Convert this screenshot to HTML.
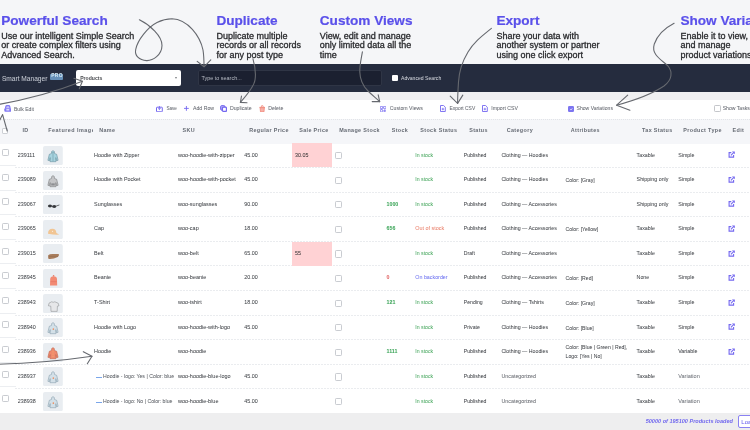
<!DOCTYPE html><html><head><meta charset="utf-8"><style>
*{box-sizing:border-box}
html,body{margin:0;padding:0}
body{width:750px;height:430px;overflow:hidden;position:relative;font-family:"Liberation Sans",sans-serif;background:#fff}
.a{position:absolute;white-space:nowrap;line-height:1;-webkit-text-stroke:0.03px currentColor}
.r{position:absolute}
#wrap{position:absolute;left:0;top:0;width:750px;height:430px;will-change:transform}
</style></head><body><div id="wrap">
<div class="r" style="left:0;top:0;width:750px;height:64px;background:#f5f6f8"></div><div class="r" style="left:0;top:64px;width:750px;height:27.6px;background:#252c3e"></div><div class="r" style="left:0;top:91.6px;width:750px;height:8.4px;background:#efeff1"></div><div class="r" style="left:0;top:100px;width:750px;height:18px;background:#fff"></div><div class="r" style="left:0;top:119px;width:750px;height:24.9px;background:#f5f6f9;border-top:1px dotted #e2e4e8"></div><div class="r" style="left:0;top:412.5px;width:750px;height:18px;background:#eeeeef"></div><div class="a" style="left:1.20px;top:14.09px;font-size:13.6px;color:#5a50ea;font-weight:bold;-webkit-text-stroke:0.2px currentColor">Powerful Search</div>
<div class="a" style="left:1.20px;top:31.68px;font-size:9.0px;color:#2a2b2e;font-weight:normal;-webkit-text-stroke:0.3px currentColor">Use our intelligent Simple Search</div>
<div class="a" style="left:1.20px;top:41.38px;font-size:9.0px;color:#2a2b2e;font-weight:normal;-webkit-text-stroke:0.3px currentColor">or create complex filters using</div>
<div class="a" style="left:1.20px;top:51.08px;font-size:9.0px;color:#2a2b2e;font-weight:normal;-webkit-text-stroke:0.3px currentColor">Advanced Search.</div>
<div class="a" style="left:216.40px;top:14.09px;font-size:13.6px;color:#5a50ea;font-weight:bold;-webkit-text-stroke:0.2px currentColor">Duplicate</div>
<div class="a" style="left:216.40px;top:31.68px;font-size:9.0px;color:#2a2b2e;font-weight:normal;-webkit-text-stroke:0.3px currentColor">Duplicate multiple</div>
<div class="a" style="left:216.40px;top:41.38px;font-size:9.0px;color:#2a2b2e;font-weight:normal;-webkit-text-stroke:0.3px currentColor">records or all records</div>
<div class="a" style="left:216.40px;top:51.08px;font-size:9.0px;color:#2a2b2e;font-weight:normal;-webkit-text-stroke:0.3px currentColor">for any post type</div>
<div class="a" style="left:319.80px;top:14.09px;font-size:13.6px;color:#5a50ea;font-weight:bold;-webkit-text-stroke:0.2px currentColor">Custom Views</div>
<div class="a" style="left:319.80px;top:31.68px;font-size:9.0px;color:#2a2b2e;font-weight:normal;-webkit-text-stroke:0.3px currentColor">View, edit and manage</div>
<div class="a" style="left:319.80px;top:41.38px;font-size:9.0px;color:#2a2b2e;font-weight:normal;-webkit-text-stroke:0.3px currentColor">only limited data all the</div>
<div class="a" style="left:319.80px;top:51.08px;font-size:9.0px;color:#2a2b2e;font-weight:normal;-webkit-text-stroke:0.3px currentColor">time</div>
<div class="a" style="left:496.40px;top:14.09px;font-size:13.6px;color:#5a50ea;font-weight:bold;-webkit-text-stroke:0.2px currentColor">Export</div>
<div class="a" style="left:496.40px;top:31.68px;font-size:9.0px;color:#2a2b2e;font-weight:normal;-webkit-text-stroke:0.3px currentColor">Share your data with</div>
<div class="a" style="left:496.40px;top:41.38px;font-size:9.0px;color:#2a2b2e;font-weight:normal;-webkit-text-stroke:0.3px currentColor">another system or partner</div>
<div class="a" style="left:496.40px;top:51.08px;font-size:9.0px;color:#2a2b2e;font-weight:normal;-webkit-text-stroke:0.3px currentColor">using one click export</div>
<div class="a" style="left:680.40px;top:14.09px;font-size:13.6px;color:#5a50ea;font-weight:bold;-webkit-text-stroke:0.2px currentColor">Show Variations</div>
<div class="a" style="left:680.40px;top:31.68px;font-size:9.0px;color:#2a2b2e;font-weight:normal;-webkit-text-stroke:0.3px currentColor">Enable it to view, edit</div>
<div class="a" style="left:680.40px;top:41.38px;font-size:9.0px;color:#2a2b2e;font-weight:normal;-webkit-text-stroke:0.3px currentColor">and manage</div>
<div class="a" style="left:680.40px;top:51.08px;font-size:9.0px;color:#2a2b2e;font-weight:normal;-webkit-text-stroke:0.3px currentColor">product variations</div>
<div class="a" style="left:1.90px;top:76.31px;font-size:6.6px;color:#c9cdd6;font-weight:normal;">Smart Manager</div>
<div class="r" style="left:49.8px;top:73.5px;width:13px;height:6.5px;background:#6690b8;border-radius:1px"></div><div class="a" style="left:51.20px;top:74.45px;font-size:4.9px;color:#d8ecf6;font-weight:bold;letter-spacing:0.35px;-webkit-text-stroke:0">PRO</div>
<div class="r" style="left:76.4px;top:70.3px;width:104.9px;height:15.8px;background:#fff;border-radius:2px"></div><div class="a" style="left:80.20px;top:75.98px;font-size:5.1px;color:#4a4c50;font-weight:bold;-webkit-text-stroke:0">Products</div>
<div class="r" style="left:175.2px;top:77.3px;width:0;height:0;border-left:1.7px solid transparent;border-right:1.7px solid transparent;border-top:2.2px solid #7a7c80"></div><div class="r" style="left:197.7px;top:70.4px;width:184px;height:15.5px;background:#1b2030;border:0.6px solid #2f3545;border-radius:2px"></div><div class="a" style="left:201.50px;top:75.59px;font-size:5.45px;color:#b8bcc5;font-weight:normal;-webkit-text-stroke:0">Type to search...</div>
<div class="r" style="left:392px;top:75.4px;width:6px;height:5.8px;background:#fff;border-radius:1px"></div><div class="a" style="left:401.00px;top:75.88px;font-size:5.1px;color:#d0d3da;font-weight:normal;">Advanced Search</div>
<svg class="r" style="left:3.7px;top:104.8px" width="7.6" height="7.2" viewBox="0 0 7.6 7.2"><path d="M1.4 3.6 L1.9 1.5 Q2.1 0.7 2.9 0.7 H4.7 Q5.5 0.7 5.7 1.5 L6.2 3.6" fill="#c9c4fa" stroke="#8379f4" stroke-width="1.2"/><rect x="0.3" y="3.2" width="7" height="3.6" rx="1" fill="#8379f4"/><rect x="2.3" y="4.3" width="3" height="1.1" fill="#fff"/></svg>
<div class="a" style="left:14.00px;top:106.73px;font-size:5.05px;color:#60646c;font-weight:normal;">Bulk Edit</div>
<svg class="r" style="left:156.2px;top:106px" width="7" height="6.2" viewBox="0 0 7 6.2"><rect x="0.5" y="1.2" width="5.8" height="4.6" rx="0.5" fill="none" stroke="#7468f0" stroke-width="1"/><path d="M3.4 0 V3.4 M2.2 2.4 L3.4 3.6 L4.6 2.4" fill="none" stroke="#7468f0" stroke-width="0.9"/></svg>
<div class="a" style="left:166.40px;top:107.11px;font-size:4.6px;color:#60646c;font-weight:normal;">Save</div>
<svg class="r" style="left:183.9px;top:105.8px" width="5" height="5" viewBox="0 0 5 5"><path d="M2.4 0 V4.8 M0 2.4 H4.8" stroke="#7468f0" stroke-width="0.9"/></svg>
<div class="a" style="left:193.00px;top:105.90px;font-size:5.2px;color:#60646c;font-weight:normal;">Add Row</div>
<svg class="r" style="left:220px;top:105.1px" width="7.2" height="7.2" viewBox="0 0 7.2 7.2"><rect x="0.6" y="0.6" width="4.4" height="4.6" rx="1.2" fill="#b3adf7" stroke="#7468f0" stroke-width="1"/><rect x="2.4" y="2.2" width="4.1" height="4.3" rx="1.2" fill="#fff" stroke="#7468f0" stroke-width="1.3"/></svg>
<div class="a" style="left:229.90px;top:105.90px;font-size:5.2px;color:#60646c;font-weight:normal;">Duplicate</div>
<svg class="r" style="left:258.6px;top:104.8px" width="6.5" height="7.4" viewBox="0 0 6.5 7.4"><path d="M2.2 2.2 L2.6 0.7 H3.9 L4.3 2.2" fill="none" stroke="#f08a7c" stroke-width="0.8"/><path d="M0.4 2.4 H6.1" stroke="#f08a7c" stroke-width="1"/><path d="M1.1 2.8 H5.4 L5 6.9 H1.5 Z" fill="#f7b0a8" stroke="#f08a7c" stroke-width="0.8"/></svg>
<div class="a" style="left:268.30px;top:105.90px;font-size:5.2px;color:#60646c;font-weight:normal;">Delete</div>
<svg class="r" style="left:379.6px;top:105.5px" width="6.6" height="6.6" viewBox="0 0 6.6 6.6"><rect x="0.3" y="0.3" width="2.4" height="2.4" rx="0.5" fill="none" stroke="#7468f0" stroke-width="0.8"/><rect x="3.6" y="0.3" width="2.4" height="2.4" rx="0.5" fill="none" stroke="#7468f0" stroke-width="0.8"/><rect x="0.3" y="3.6" width="2.4" height="2.4" rx="0.5" fill="none" stroke="#7468f0" stroke-width="0.8"/><path d="M4.8 3.4 V6.4 M3.3 4.9 H6.3" stroke="#7468f0" stroke-width="0.8"/></svg>
<div class="a" style="left:389.80px;top:105.90px;font-size:5.2px;color:#60646c;font-weight:normal;">Custom Views</div>
<svg class="r" style="left:440px;top:105.3px" width="6" height="7" viewBox="0 0 6 7"><path d="M0.5 0.5 H3.6 L5.3 2.2 V6.5 H0.5 Z" fill="none" stroke="#7468f0" stroke-width="0.9"/><path d="M2.9 2.8 V5.3 M1.7 4.1 H4.1" stroke="#7468f0" stroke-width="0.8"/></svg>
<div class="a" style="left:449.40px;top:106.81px;font-size:4.95px;color:#60646c;font-weight:normal;">Export CSV</div>
<svg class="r" style="left:482px;top:105.3px" width="6" height="7" viewBox="0 0 6 7"><path d="M0.5 0.5 H3.6 L5.3 2.2 V6.5 H0.5 Z" fill="none" stroke="#7468f0" stroke-width="0.9"/><path d="M2.9 2.8 V5.3 M1.7 4.1 H4.1" stroke="#7468f0" stroke-width="0.8"/></svg>
<div class="a" style="left:491.20px;top:105.90px;font-size:5.2px;color:#60646c;font-weight:normal;">Import CSV</div>
<div class="r" style="left:567.6px;top:105.6px;width:6.4px;height:6.2px;background:#7d75f0;border-radius:1.2px"></div><svg class="r" style="left:567.6px;top:105.6px" width="6.4" height="6.2" viewBox="0 0 6.4 6.2"><path d="M2.2 3.3 L3 4 L4.3 2.4" fill="none" stroke="#fff" stroke-width="0.7"/></svg>
<div class="a" style="left:576.50px;top:105.98px;font-size:5.1px;color:#60646c;font-weight:normal;">Show Variations</div>
<div class="r" style="left:714.3px;top:105.1px;width:6.4px;height:6.5px;background:#fff;border:0.7px solid #c4c6ca;border-radius:1.2px"></div><div class="a" style="left:722.70px;top:105.98px;font-size:5.1px;color:#60646c;font-weight:normal;">Show Tasks</div>
<div class="r" style="left:2.1px;top:127.5px;width:6.4px;height:6.3px;background:#fff;border:0.6px solid #cdd0d5;border-radius:1px"></div><div class="a" style="left:22.50px;top:127.93px;font-size:5.4px;color:#666b74;font-weight:bold;letter-spacing:0.37px;-webkit-text-stroke:0">ID</div>
<div class="a" style="left:48.30px;top:127.93px;font-size:5.4px;color:#666b74;font-weight:bold;letter-spacing:0.37px;-webkit-text-stroke:0;width:44.5px;overflow:hidden;letter-spacing:0.5px">Featured Image</div>
<div class="a" style="left:99.20px;top:127.93px;font-size:5.4px;color:#666b74;font-weight:bold;letter-spacing:0.37px;-webkit-text-stroke:0">Name</div>
<div class="a" style="left:182.50px;top:127.93px;font-size:5.4px;color:#666b74;font-weight:bold;letter-spacing:0.37px;-webkit-text-stroke:0">SKU</div>
<div class="a" style="left:249.20px;top:127.93px;font-size:5.4px;color:#666b74;font-weight:bold;letter-spacing:0.37px;-webkit-text-stroke:0">Regular Price</div>
<div class="a" style="left:299.20px;top:127.93px;font-size:5.4px;color:#666b74;font-weight:bold;letter-spacing:0.37px;-webkit-text-stroke:0">Sale Price</div>
<div class="a" style="left:339.20px;top:127.93px;font-size:5.4px;color:#666b74;font-weight:bold;letter-spacing:0.37px;-webkit-text-stroke:0">Manage Stock</div>
<div class="a" style="left:391.70px;top:127.93px;font-size:5.4px;color:#666b74;font-weight:bold;letter-spacing:0.37px;-webkit-text-stroke:0">Stock</div>
<div class="a" style="left:420.30px;top:127.93px;font-size:5.4px;color:#666b74;font-weight:bold;letter-spacing:0.37px;-webkit-text-stroke:0">Stock Status</div>
<div class="a" style="left:469.20px;top:127.93px;font-size:5.4px;color:#666b74;font-weight:bold;letter-spacing:0.37px;-webkit-text-stroke:0">Status</div>
<div class="a" style="left:506.70px;top:127.93px;font-size:5.4px;color:#666b74;font-weight:bold;letter-spacing:0.37px;-webkit-text-stroke:0">Category</div>
<div class="a" style="left:570.80px;top:127.93px;font-size:5.4px;color:#666b74;font-weight:bold;letter-spacing:0.37px;-webkit-text-stroke:0">Attributes</div>
<div class="a" style="left:642.00px;top:127.93px;font-size:5.4px;color:#666b74;font-weight:bold;letter-spacing:0.37px;-webkit-text-stroke:0">Tax Status</div>
<div class="a" style="left:683.30px;top:127.93px;font-size:5.4px;color:#666b74;font-weight:bold;letter-spacing:0.37px;-webkit-text-stroke:0">Product Type</div>
<div class="a" style="left:732.50px;top:127.93px;font-size:5.4px;color:#666b74;font-weight:bold;letter-spacing:0.37px;-webkit-text-stroke:0">Edit</div>
<div class="r" style="left:15px;top:166.90px;width:735px;height:1px;background:repeating-linear-gradient(90deg,#eaecef 0 2px,transparent 2px 3px)"></div><div class="r" style="left:0;top:164.90px;width:16px;height:1px;background:#eceef1"></div><div class="r" style="left:2px;top:149.10px;width:7px;height:7.2px;background:#fff;border:0.7px solid #c9ccd1;border-radius:1.2px"></div><div class="a" style="left:17.80px;top:153.30px;font-size:5.36px;color:#3e4146;font-weight:normal;">239111</div>
<svg class="r" style="left:42.9px;top:145.90px" width="19.8" height="19.2" viewBox="0 0 19.8 19.2"><rect width="19.8" height="19.2" rx="2" fill="#e9edf1"/><g transform="translate(10,10) scale(0.88) translate(-10,-9.5)"><path d="M8.3,6.6 Q8,3.6 10,3.4 Q12,3.6 11.7,6.6 L14.2,7.6 L15.8,14.4 L14,14.9 L13.2,11.3 L13.3,16 L6.7,16 L6.8,11.3 L6,14.9 L4.2,14.4 L5.8,7.6 Z" fill="#a6d3df" stroke="#5f8795" stroke-width="0.6"/><path d="M10,6.2 V15.5 M8.2,5 Q10,7 11.8,5" stroke="#5f8795" stroke-width="0.5" fill="none"/></g></svg><div class="a" style="left:94.10px;top:153.24px;font-size:5.43px;color:#3e4146;font-weight:normal;">Hoodie with Zipper</div>
<div class="a" style="left:178.00px;top:153.20px;font-size:5.48px;color:#3e4146;font-weight:normal;">woo-hoodie-with-zipper</div>
<div class="a" style="left:244.30px;top:153.30px;font-size:5.36px;color:#3e4146;font-weight:normal;">45.00</div>
<div class="r" style="left:292.3px;top:143.30px;width:39.8px;height:24.2px;background:#ffd2d4"></div><div class="a" style="left:295.00px;top:153.30px;font-size:5.36px;color:#333;font-weight:normal;">30.05</div>
<div class="r" style="left:334.5px;top:152.00px;width:7.2px;height:7.2px;background:#fff;border:0.7px solid #c9ccd1;border-radius:1.2px"></div><div class="a" style="left:415.30px;top:153.44px;font-size:5.2px;color:#4aa861;font-weight:normal;">In stock</div>
<div class="a" style="left:463.80px;top:153.46px;font-size:5.17px;color:#3e4146;font-weight:normal;">Published</div>
<div class="a" style="left:501.40px;top:153.39px;font-size:5.26px;color:#3e4146;font-weight:normal;">Clothing — Hoodies</div>
<div class="a" style="left:636.60px;top:153.35px;font-size:5.3px;color:#3e4146;font-weight:normal;">Taxable</div>
<div class="a" style="left:678.20px;top:153.33px;font-size:5.33px;color:#3e4146;font-weight:normal;">Simple</div>
<svg class="r" style="left:727.9px;top:151.20000000000002px" width="7" height="7" viewBox="0 0 7 7"><path d="M3.3 1.6 H1.1 V6.1 H5.6 V4" fill="none" stroke="#7468f0" stroke-width="1.1"/><path d="M2.9 4.3 L5.6 1.6" fill="none" stroke="#7468f0" stroke-width="1.1"/><path d="M3.9 0.4 H6.8 V3.3 Z" fill="#7468f0"/></svg>
<div class="r" style="left:15px;top:191.50px;width:735px;height:1px;background:repeating-linear-gradient(90deg,#eaecef 0 2px,transparent 2px 3px)"></div><div class="r" style="left:0;top:189.50px;width:16px;height:1px;background:#eceef1"></div><div class="r" style="left:2px;top:173.70px;width:7px;height:7.2px;background:#fff;border:0.7px solid #c9ccd1;border-radius:1.2px"></div><div class="a" style="left:17.80px;top:177.30px;font-size:5.36px;color:#3e4146;font-weight:normal;">239089</div>
<svg class="r" style="left:42.9px;top:170.50px" width="19.8" height="19.2" viewBox="0 0 19.8 19.2"><rect width="19.8" height="19.2" rx="2" fill="#e9edf1"/><g transform="translate(10,10) scale(0.88) translate(-10,-9.5)"><path d="M8.3,6.6 Q8,3.6 10,3.4 Q12,3.6 11.7,6.6 L14.2,7.6 L15.8,14.4 L14,14.9 L13.2,11.3 L13.3,16 L6.7,16 L6.8,11.3 L6,14.9 L4.2,14.4 L5.8,7.6 Z" fill="#c4c5c7" stroke="#6f7073" stroke-width="0.6"/><rect x="8" y="12.2" width="4" height="2.4" fill="#8d8e91"/></g></svg><div class="a" style="left:94.10px;top:177.24px;font-size:5.43px;color:#3e4146;font-weight:normal;">Hoodie with Pocket</div>
<div class="a" style="left:178.00px;top:177.20px;font-size:5.48px;color:#3e4146;font-weight:normal;">woo-hoodie-with-pocket</div>
<div class="a" style="left:244.30px;top:177.30px;font-size:5.36px;color:#3e4146;font-weight:normal;">45.00</div>
<div class="r" style="left:334.5px;top:176.60px;width:7.2px;height:7.2px;background:#fff;border:0.7px solid #c9ccd1;border-radius:1.2px"></div><div class="a" style="left:415.30px;top:177.44px;font-size:5.2px;color:#4aa861;font-weight:normal;">In stock</div>
<div class="a" style="left:463.80px;top:177.46px;font-size:5.17px;color:#3e4146;font-weight:normal;">Published</div>
<div class="a" style="left:501.40px;top:177.39px;font-size:5.26px;color:#3e4146;font-weight:normal;">Clothing — Hoodies</div>
<div class="a" style="left:565.60px;top:177.50px;font-size:5.13px;color:#3e4146;font-weight:normal;">Color: [Gray]</div>
<div class="a" style="left:636.60px;top:177.35px;font-size:5.3px;color:#3e4146;font-weight:normal;">Shipping only</div>
<div class="a" style="left:678.20px;top:177.33px;font-size:5.33px;color:#3e4146;font-weight:normal;">Simple</div>
<svg class="r" style="left:727.9px;top:175.8px" width="7" height="7" viewBox="0 0 7 7"><path d="M3.3 1.6 H1.1 V6.1 H5.6 V4" fill="none" stroke="#7468f0" stroke-width="1.1"/><path d="M2.9 4.3 L5.6 1.6" fill="none" stroke="#7468f0" stroke-width="1.1"/><path d="M3.9 0.4 H6.8 V3.3 Z" fill="#7468f0"/></svg>
<div class="r" style="left:15px;top:216.10px;width:735px;height:1px;background:repeating-linear-gradient(90deg,#eaecef 0 2px,transparent 2px 3px)"></div><div class="r" style="left:0;top:214.10px;width:16px;height:1px;background:#eceef1"></div><div class="r" style="left:2px;top:198.30px;width:7px;height:7.2px;background:#fff;border:0.7px solid #c9ccd1;border-radius:1.2px"></div><div class="a" style="left:17.80px;top:202.30px;font-size:5.36px;color:#3e4146;font-weight:normal;">239067</div>
<svg class="r" style="left:42.9px;top:195.10px" width="19.8" height="19.2" viewBox="0 0 19.8 19.2"><rect width="19.8" height="19.2" rx="2" fill="#e9edf1"/><ellipse cx="7" cy="11" rx="2.1" ry="1.5" fill="#35373b"/><ellipse cx="11.2" cy="11.5" rx="2.2" ry="1.5" fill="#35373b"/><path d="M8.8,11.2 L9.3,11.3 M13.2,11 L16.4,10" stroke="#4a4c50" stroke-width="0.8"/></svg><div class="a" style="left:94.10px;top:202.24px;font-size:5.43px;color:#3e4146;font-weight:normal;">Sunglasses</div>
<div class="a" style="left:178.00px;top:202.20px;font-size:5.48px;color:#3e4146;font-weight:normal;">woo-sunglasses</div>
<div class="a" style="left:244.30px;top:202.30px;font-size:5.36px;color:#3e4146;font-weight:normal;">90.00</div>
<div class="r" style="left:334.5px;top:201.20px;width:7.2px;height:7.2px;background:#fff;border:0.7px solid #c9ccd1;border-radius:1.2px"></div><div class="a" style="left:386.50px;top:202.35px;font-size:5.3px;color:#3ea55a;font-weight:bold;">1000</div>
<div class="a" style="left:415.30px;top:202.44px;font-size:5.2px;color:#4aa861;font-weight:normal;">In stock</div>
<div class="a" style="left:463.80px;top:202.46px;font-size:5.17px;color:#3e4146;font-weight:normal;">Published</div>
<div class="a" style="left:501.40px;top:202.39px;font-size:5.26px;color:#3e4146;font-weight:normal;">Clothing — Accessories</div>
<div class="a" style="left:636.60px;top:202.35px;font-size:5.3px;color:#3e4146;font-weight:normal;">Shipping only</div>
<div class="a" style="left:678.20px;top:202.33px;font-size:5.33px;color:#3e4146;font-weight:normal;">Simple</div>
<svg class="r" style="left:727.9px;top:200.40000000000003px" width="7" height="7" viewBox="0 0 7 7"><path d="M3.3 1.6 H1.1 V6.1 H5.6 V4" fill="none" stroke="#7468f0" stroke-width="1.1"/><path d="M2.9 4.3 L5.6 1.6" fill="none" stroke="#7468f0" stroke-width="1.1"/><path d="M3.9 0.4 H6.8 V3.3 Z" fill="#7468f0"/></svg>
<div class="r" style="left:15px;top:240.70px;width:735px;height:1px;background:repeating-linear-gradient(90deg,#eaecef 0 2px,transparent 2px 3px)"></div><div class="r" style="left:0;top:238.70px;width:16px;height:1px;background:#eceef1"></div><div class="r" style="left:2px;top:222.90px;width:7px;height:7.2px;background:#fff;border:0.7px solid #c9ccd1;border-radius:1.2px"></div><div class="a" style="left:17.80px;top:226.30px;font-size:5.36px;color:#3e4146;font-weight:normal;">239065</div>
<svg class="r" style="left:42.9px;top:219.70px" width="19.8" height="19.2" viewBox="0 0 19.8 19.2"><rect width="19.8" height="19.2" rx="2" fill="#e9edf1"/><path d="M5,13.8 Q5,8.8 9.5,8.8 Q13,8.8 13.4,13 L16.2,14.6 Q12,15 5,13.8 Z" fill="#f1c593"/><circle cx="9.6" cy="11.2" r="0.5" fill="#fff"/></svg><div class="a" style="left:94.10px;top:226.24px;font-size:5.43px;color:#3e4146;font-weight:normal;">Cap</div>
<div class="a" style="left:178.00px;top:226.20px;font-size:5.48px;color:#3e4146;font-weight:normal;">woo-cap</div>
<div class="a" style="left:244.30px;top:226.30px;font-size:5.36px;color:#3e4146;font-weight:normal;">18.00</div>
<div class="r" style="left:334.5px;top:225.80px;width:7.2px;height:7.2px;background:#fff;border:0.7px solid #c9ccd1;border-radius:1.2px"></div><div class="a" style="left:386.50px;top:226.35px;font-size:5.3px;color:#3ea55a;font-weight:bold;">656</div>
<div class="a" style="left:415.30px;top:226.23px;font-size:5.45px;color:#e9826e;font-weight:normal;">Out of stock</div>
<div class="a" style="left:463.80px;top:226.46px;font-size:5.17px;color:#3e4146;font-weight:normal;">Published</div>
<div class="a" style="left:501.40px;top:226.39px;font-size:5.26px;color:#3e4146;font-weight:normal;">Clothing — Accessories</div>
<div class="a" style="left:565.60px;top:226.50px;font-size:5.13px;color:#3e4146;font-weight:normal;">Color: [Yellow]</div>
<div class="a" style="left:636.60px;top:226.35px;font-size:5.3px;color:#3e4146;font-weight:normal;">Taxable</div>
<div class="a" style="left:678.20px;top:226.33px;font-size:5.33px;color:#3e4146;font-weight:normal;">Simple</div>
<svg class="r" style="left:727.9px;top:225.00000000000003px" width="7" height="7" viewBox="0 0 7 7"><path d="M3.3 1.6 H1.1 V6.1 H5.6 V4" fill="none" stroke="#7468f0" stroke-width="1.1"/><path d="M2.9 4.3 L5.6 1.6" fill="none" stroke="#7468f0" stroke-width="1.1"/><path d="M3.9 0.4 H6.8 V3.3 Z" fill="#7468f0"/></svg>
<div class="r" style="left:15px;top:265.30px;width:735px;height:1px;background:repeating-linear-gradient(90deg,#eaecef 0 2px,transparent 2px 3px)"></div><div class="r" style="left:0;top:263.30px;width:16px;height:1px;background:#eceef1"></div><div class="r" style="left:2px;top:247.50px;width:7px;height:7.2px;background:#fff;border:0.7px solid #c9ccd1;border-radius:1.2px"></div><div class="a" style="left:17.80px;top:251.30px;font-size:5.36px;color:#3e4146;font-weight:normal;">239015</div>
<svg class="r" style="left:42.9px;top:244.30px" width="19.8" height="19.2" viewBox="0 0 19.8 19.2"><rect width="19.8" height="19.2" rx="2" fill="#e9edf1"/><path d="M5.2,11.2 Q6.5,9.8 10,9.9 L15.8,10 Q16.4,12 14.8,13 Q10,15.5 5.6,15 Q4.8,13.3 5.2,11.2 Z" fill="#a77c5c"/><path d="M6,12.5 H15" stroke="#8c6448" stroke-width="0.4"/></svg><div class="a" style="left:94.10px;top:251.24px;font-size:5.43px;color:#3e4146;font-weight:normal;">Belt</div>
<div class="a" style="left:178.00px;top:251.20px;font-size:5.48px;color:#3e4146;font-weight:normal;">woo-belt</div>
<div class="a" style="left:244.30px;top:251.30px;font-size:5.36px;color:#3e4146;font-weight:normal;">65.00</div>
<div class="r" style="left:292.3px;top:241.70px;width:39.8px;height:24.2px;background:#ffd2d4"></div><div class="a" style="left:295.00px;top:251.30px;font-size:5.36px;color:#333;font-weight:normal;">55</div>
<div class="r" style="left:334.5px;top:250.40px;width:7.2px;height:7.2px;background:#fff;border:0.7px solid #c9ccd1;border-radius:1.2px"></div><div class="a" style="left:415.30px;top:251.44px;font-size:5.2px;color:#4aa861;font-weight:normal;">In stock</div>
<div class="a" style="left:463.80px;top:251.46px;font-size:5.17px;color:#3e4146;font-weight:normal;">Draft</div>
<div class="a" style="left:501.40px;top:251.39px;font-size:5.26px;color:#3e4146;font-weight:normal;">Clothing — Accessories</div>
<div class="a" style="left:636.60px;top:251.35px;font-size:5.3px;color:#3e4146;font-weight:normal;">Taxable</div>
<div class="a" style="left:678.20px;top:251.33px;font-size:5.33px;color:#3e4146;font-weight:normal;">Simple</div>
<svg class="r" style="left:727.9px;top:249.60000000000002px" width="7" height="7" viewBox="0 0 7 7"><path d="M3.3 1.6 H1.1 V6.1 H5.6 V4" fill="none" stroke="#7468f0" stroke-width="1.1"/><path d="M2.9 4.3 L5.6 1.6" fill="none" stroke="#7468f0" stroke-width="1.1"/><path d="M3.9 0.4 H6.8 V3.3 Z" fill="#7468f0"/></svg>
<div class="r" style="left:15px;top:289.90px;width:735px;height:1px;background:repeating-linear-gradient(90deg,#eaecef 0 2px,transparent 2px 3px)"></div><div class="r" style="left:0;top:287.90px;width:16px;height:1px;background:#eceef1"></div><div class="r" style="left:2px;top:272.10px;width:7px;height:7.2px;background:#fff;border:0.7px solid #c9ccd1;border-radius:1.2px"></div><div class="a" style="left:17.80px;top:275.30px;font-size:5.36px;color:#3e4146;font-weight:normal;">238945</div>
<svg class="r" style="left:42.9px;top:268.90px" width="19.8" height="19.2" viewBox="0 0 19.8 19.2"><rect width="19.8" height="19.2" rx="2" fill="#e9edf1"/><path d="M7.2,10 Q7.4,7.2 10.6,7.2 Q13.8,7.2 14,10 L14.2,16.6 L7,16.6 Z" fill="#f28a73"/><circle cx="10.6" cy="6.8" r="0.8" fill="#e87a63"/><path d="M7.5,12.6 H13.8" stroke="#de6b56" stroke-width="0.4"/></svg><div class="a" style="left:94.10px;top:275.24px;font-size:5.43px;color:#3e4146;font-weight:normal;">Beanie</div>
<div class="a" style="left:178.00px;top:275.20px;font-size:5.48px;color:#3e4146;font-weight:normal;">woo-beanie</div>
<div class="a" style="left:244.30px;top:275.30px;font-size:5.36px;color:#3e4146;font-weight:normal;">20.00</div>
<div class="r" style="left:334.5px;top:275.00px;width:7.2px;height:7.2px;background:#fff;border:0.7px solid #c9ccd1;border-radius:1.2px"></div><div class="a" style="left:386.50px;top:275.35px;font-size:5.3px;color:#e06666;font-weight:bold;">0</div>
<div class="a" style="left:415.30px;top:275.33px;font-size:5.33px;color:#6e73f0;font-weight:normal;">On backorder</div>
<div class="a" style="left:463.80px;top:275.46px;font-size:5.17px;color:#3e4146;font-weight:normal;">Published</div>
<div class="a" style="left:501.40px;top:275.39px;font-size:5.26px;color:#3e4146;font-weight:normal;">Clothing — Accessories</div>
<div class="a" style="left:565.60px;top:275.50px;font-size:5.13px;color:#3e4146;font-weight:normal;">Color: [Red]</div>
<div class="a" style="left:636.60px;top:275.35px;font-size:5.3px;color:#3e4146;font-weight:normal;">None</div>
<div class="a" style="left:678.20px;top:275.33px;font-size:5.33px;color:#3e4146;font-weight:normal;">Simple</div>
<svg class="r" style="left:727.9px;top:274.2px" width="7" height="7" viewBox="0 0 7 7"><path d="M3.3 1.6 H1.1 V6.1 H5.6 V4" fill="none" stroke="#7468f0" stroke-width="1.1"/><path d="M2.9 4.3 L5.6 1.6" fill="none" stroke="#7468f0" stroke-width="1.1"/><path d="M3.9 0.4 H6.8 V3.3 Z" fill="#7468f0"/></svg>
<div class="r" style="left:15px;top:314.50px;width:735px;height:1px;background:repeating-linear-gradient(90deg,#eaecef 0 2px,transparent 2px 3px)"></div><div class="r" style="left:0;top:312.50px;width:16px;height:1px;background:#eceef1"></div><div class="r" style="left:2px;top:296.70px;width:7px;height:7.2px;background:#fff;border:0.7px solid #c9ccd1;border-radius:1.2px"></div><div class="a" style="left:17.80px;top:300.30px;font-size:5.36px;color:#3e4146;font-weight:normal;">238943</div>
<svg class="r" style="left:42.9px;top:293.50px" width="19.8" height="19.2" viewBox="0 0 19.8 19.2"><rect width="19.8" height="19.2" rx="2" fill="#e9edf1"/><path d="M8.6,7.8 Q10.2,8.8 11.8,7.8 L15.2,9.2 L16,11.8 L14.4,12.2 L14.2,17.4 L8,17.4 L7.8,12.2 L5.4,11.8 L6,9.2 Z" fill="#e6e7e9" stroke="#77787b" stroke-width="0.45"/></svg><div class="a" style="left:94.10px;top:300.24px;font-size:5.43px;color:#3e4146;font-weight:normal;">T-Shirt</div>
<div class="a" style="left:178.00px;top:300.20px;font-size:5.48px;color:#3e4146;font-weight:normal;">woo-tshirt</div>
<div class="a" style="left:244.30px;top:300.30px;font-size:5.36px;color:#3e4146;font-weight:normal;">18.00</div>
<div class="r" style="left:334.5px;top:299.60px;width:7.2px;height:7.2px;background:#fff;border:0.7px solid #c9ccd1;border-radius:1.2px"></div><div class="a" style="left:386.50px;top:300.35px;font-size:5.3px;color:#3ea55a;font-weight:bold;">121</div>
<div class="a" style="left:415.30px;top:300.44px;font-size:5.2px;color:#4aa861;font-weight:normal;">In stock</div>
<div class="a" style="left:463.80px;top:300.46px;font-size:5.17px;color:#3e4146;font-weight:normal;">Pending</div>
<div class="a" style="left:501.40px;top:300.39px;font-size:5.26px;color:#3e4146;font-weight:normal;">Clothing — Tshirts</div>
<div class="a" style="left:565.60px;top:300.50px;font-size:5.13px;color:#3e4146;font-weight:normal;">Color: [Gray]</div>
<div class="a" style="left:636.60px;top:300.35px;font-size:5.3px;color:#3e4146;font-weight:normal;">Taxable</div>
<div class="a" style="left:678.20px;top:300.33px;font-size:5.33px;color:#3e4146;font-weight:normal;">Simple</div>
<svg class="r" style="left:727.9px;top:298.8px" width="7" height="7" viewBox="0 0 7 7"><path d="M3.3 1.6 H1.1 V6.1 H5.6 V4" fill="none" stroke="#7468f0" stroke-width="1.1"/><path d="M2.9 4.3 L5.6 1.6" fill="none" stroke="#7468f0" stroke-width="1.1"/><path d="M3.9 0.4 H6.8 V3.3 Z" fill="#7468f0"/></svg>
<div class="r" style="left:15px;top:339.10px;width:735px;height:1px;background:repeating-linear-gradient(90deg,#eaecef 0 2px,transparent 2px 3px)"></div><div class="r" style="left:0;top:337.10px;width:16px;height:1px;background:#eceef1"></div><div class="r" style="left:2px;top:321.30px;width:7px;height:7.2px;background:#fff;border:0.7px solid #c9ccd1;border-radius:1.2px"></div><div class="a" style="left:17.80px;top:325.30px;font-size:5.36px;color:#3e4146;font-weight:normal;">238940</div>
<svg class="r" style="left:42.9px;top:318.10px" width="19.8" height="19.2" viewBox="0 0 19.8 19.2"><rect width="19.8" height="19.2" rx="2" fill="#e9edf1"/><g transform="translate(10,10) scale(0.88) translate(-10,-9.5)"><path d="M8.3,6.6 Q8,3.6 10,3.4 Q12,3.6 11.7,6.6 L14.2,7.6 L15.8,14.4 L14,14.9 L13.2,11.3 L13.3,16 L6.7,16 L6.8,11.3 L6,14.9 L4.2,14.4 L5.8,7.6 Z" fill="#d3e0e8" stroke="#7d96a5" stroke-width="0.6"/><circle cx="10.4" cy="10.8" r="0.9" fill="#ef8a5a"/></g></svg><div class="a" style="left:94.10px;top:325.24px;font-size:5.43px;color:#3e4146;font-weight:normal;">Hoodie with Logo</div>
<div class="a" style="left:178.00px;top:325.20px;font-size:5.48px;color:#3e4146;font-weight:normal;">woo-hoodie-with-logo</div>
<div class="a" style="left:244.30px;top:325.30px;font-size:5.36px;color:#3e4146;font-weight:normal;">45.00</div>
<div class="r" style="left:334.5px;top:324.20px;width:7.2px;height:7.2px;background:#fff;border:0.7px solid #c9ccd1;border-radius:1.2px"></div><div class="a" style="left:415.30px;top:325.44px;font-size:5.2px;color:#4aa861;font-weight:normal;">In stock</div>
<div class="a" style="left:463.80px;top:325.46px;font-size:5.17px;color:#3e4146;font-weight:normal;">Private</div>
<div class="a" style="left:501.40px;top:325.39px;font-size:5.26px;color:#3e4146;font-weight:normal;">Clothing — Hoodies</div>
<div class="a" style="left:565.60px;top:325.50px;font-size:5.13px;color:#3e4146;font-weight:normal;">Color: [Blue]</div>
<div class="a" style="left:636.60px;top:325.35px;font-size:5.3px;color:#3e4146;font-weight:normal;">Taxable</div>
<div class="a" style="left:678.20px;top:325.33px;font-size:5.33px;color:#3e4146;font-weight:normal;">Simple</div>
<svg class="r" style="left:727.9px;top:323.40000000000003px" width="7" height="7" viewBox="0 0 7 7"><path d="M3.3 1.6 H1.1 V6.1 H5.6 V4" fill="none" stroke="#7468f0" stroke-width="1.1"/><path d="M2.9 4.3 L5.6 1.6" fill="none" stroke="#7468f0" stroke-width="1.1"/><path d="M3.9 0.4 H6.8 V3.3 Z" fill="#7468f0"/></svg>
<div class="r" style="left:15px;top:363.70px;width:735px;height:1px;background:repeating-linear-gradient(90deg,#eaecef 0 2px,transparent 2px 3px)"></div><div class="r" style="left:0;top:361.70px;width:16px;height:1px;background:#eceef1"></div><div class="r" style="left:2px;top:345.90px;width:7px;height:7.2px;background:#fff;border:0.7px solid #c9ccd1;border-radius:1.2px"></div><div class="a" style="left:17.80px;top:349.30px;font-size:5.36px;color:#3e4146;font-weight:normal;">238936</div>
<svg class="r" style="left:42.9px;top:342.70px" width="19.8" height="19.2" viewBox="0 0 19.8 19.2"><rect width="19.8" height="19.2" rx="2" fill="#e9edf1"/><g transform="translate(10,10) scale(0.88) translate(-10,-9.5)"><path d="M8.3,6.6 Q8,3.6 10,3.4 Q12,3.6 11.7,6.6 L14.2,7.6 L15.8,14.4 L14,14.9 L13.2,11.3 L13.3,16 L6.7,16 L6.8,11.3 L6,14.9 L4.2,14.4 L5.8,7.6 Z" fill="#f0896c" stroke="#b85e44" stroke-width="0.6"/><path d="M10,7 V15" stroke="#f6cf74" stroke-width="0.6" stroke-dasharray="1,1"/></g></svg><div class="a" style="left:94.10px;top:349.24px;font-size:5.43px;color:#3e4146;font-weight:normal;">Hoodie</div>
<div class="a" style="left:178.00px;top:349.20px;font-size:5.48px;color:#3e4146;font-weight:normal;">woo-hoodie</div>
<div class="r" style="left:334.5px;top:348.80px;width:7.2px;height:7.2px;background:#fff;border:0.7px solid #c9ccd1;border-radius:1.2px"></div><div class="a" style="left:386.50px;top:349.35px;font-size:5.3px;color:#3ea55a;font-weight:bold;">1111</div>
<div class="a" style="left:415.30px;top:349.44px;font-size:5.2px;color:#4aa861;font-weight:normal;">In stock</div>
<div class="a" style="left:463.80px;top:349.46px;font-size:5.17px;color:#3e4146;font-weight:normal;">Published</div>
<div class="a" style="left:501.40px;top:349.39px;font-size:5.26px;color:#3e4146;font-weight:normal;">Clothing — Hoodies</div>
<div class="a" style="left:565.60px;top:345.40px;font-size:5.13px;color:#3e4146;font-weight:normal;">Color: [Blue | Green | Red],</div>
<div class="a" style="left:565.60px;top:353.70px;font-size:5.13px;color:#3e4146;font-weight:normal;">Logo: [Yes | No]</div>
<div class="a" style="left:636.60px;top:349.35px;font-size:5.3px;color:#3e4146;font-weight:normal;">Taxable</div>
<div class="a" style="left:678.20px;top:349.33px;font-size:5.33px;color:#3e4146;font-weight:normal;">Variable</div>
<svg class="r" style="left:727.9px;top:348.00000000000006px" width="7" height="7" viewBox="0 0 7 7"><path d="M3.3 1.6 H1.1 V6.1 H5.6 V4" fill="none" stroke="#7468f0" stroke-width="1.1"/><path d="M2.9 4.3 L5.6 1.6" fill="none" stroke="#7468f0" stroke-width="1.1"/><path d="M3.9 0.4 H6.8 V3.3 Z" fill="#7468f0"/></svg>
<div class="r" style="left:15px;top:388.30px;width:735px;height:1px;background:repeating-linear-gradient(90deg,#eaecef 0 2px,transparent 2px 3px)"></div><div class="r" style="left:0;top:386.30px;width:16px;height:1px;background:#eceef1"></div><div class="r" style="left:2px;top:370.50px;width:7px;height:7.2px;background:#fff;border:0.7px solid #c9ccd1;border-radius:1.2px"></div><div class="a" style="left:17.80px;top:374.30px;font-size:5.36px;color:#3e4146;font-weight:normal;">238937</div>
<svg class="r" style="left:42.9px;top:367.30px" width="19.8" height="19.2" viewBox="0 0 19.8 19.2"><rect width="19.8" height="19.2" rx="2" fill="#e9edf1"/><g transform="translate(10,10) scale(0.88) translate(-10,-9.5)"><path d="M8.3,6.6 Q8,3.6 10,3.4 Q12,3.6 11.7,6.6 L14.2,7.6 L15.8,14.4 L14,14.9 L13.2,11.3 L13.3,16 L6.7,16 L6.8,11.3 L6,14.9 L4.2,14.4 L5.8,7.6 Z" fill="#d3e0e8" stroke="#7d96a5" stroke-width="0.6"/><circle cx="10.4" cy="10.8" r="0.9" fill="#ef8a5a"/></g></svg><div class="r" style="left:96.1px;top:376.94px;width:5.5px;height:0.8px;background:#7aa6ea"></div><div class="a" style="left:103.10px;top:374.47px;font-size:5.16px;color:#55595f;font-weight:normal;">Hoodie - logo: Yes | Color: blue</div>
<div class="a" style="left:178.00px;top:374.20px;font-size:5.48px;color:#3e4146;font-weight:normal;">woo-hoodie-blue-logo</div>
<div class="a" style="left:244.30px;top:374.30px;font-size:5.36px;color:#3e4146;font-weight:normal;">45.00</div>
<div class="r" style="left:334.5px;top:373.40px;width:7.2px;height:7.2px;background:#fff;border:0.7px solid #c9ccd1;border-radius:1.2px"></div><div class="a" style="left:415.30px;top:374.44px;font-size:5.2px;color:#4aa861;font-weight:normal;">In stock</div>
<div class="a" style="left:463.80px;top:374.46px;font-size:5.17px;color:#3e4146;font-weight:normal;">Published</div>
<div class="a" style="left:501.40px;top:374.29px;font-size:5.37px;color:#65686e;font-weight:normal;">Uncategorized</div>
<div class="a" style="left:636.60px;top:374.35px;font-size:5.3px;color:#3e4146;font-weight:normal;">Taxable</div>
<div class="a" style="left:678.20px;top:374.12px;font-size:5.58px;color:#6a6e75;font-weight:normal;">Variation</div>
<div class="r" style="left:2px;top:395.10px;width:7px;height:7.2px;background:#fff;border:0.7px solid #c9ccd1;border-radius:1.2px"></div><div class="a" style="left:17.80px;top:399.30px;font-size:5.36px;color:#3e4146;font-weight:normal;">238938</div>
<svg class="r" style="left:42.9px;top:391.90px" width="19.8" height="19.2" viewBox="0 0 19.8 19.2"><rect width="19.8" height="19.2" rx="2" fill="#e9edf1"/><g transform="translate(10,10) scale(0.88) translate(-10,-9.5)"><path d="M8.3,6.6 Q8,3.6 10,3.4 Q12,3.6 11.7,6.6 L14.2,7.6 L15.8,14.4 L14,14.9 L13.2,11.3 L13.3,16 L6.7,16 L6.8,11.3 L6,14.9 L4.2,14.4 L5.8,7.6 Z" fill="#d3e0e8" stroke="#7d96a5" stroke-width="0.6"/><circle cx="10.4" cy="10.8" r="0.9" fill="#ef8a5a"/></g></svg><div class="r" style="left:96.1px;top:401.94px;width:5.5px;height:0.8px;background:#7aa6ea"></div><div class="a" style="left:103.10px;top:399.47px;font-size:5.16px;color:#55595f;font-weight:normal;">Hoodie - logo: No | Color: blue</div>
<div class="a" style="left:178.00px;top:399.20px;font-size:5.48px;color:#3e4146;font-weight:normal;">woo-hoodie-blue</div>
<div class="a" style="left:244.30px;top:399.30px;font-size:5.36px;color:#3e4146;font-weight:normal;">45.00</div>
<div class="r" style="left:334.5px;top:398.00px;width:7.2px;height:7.2px;background:#fff;border:0.7px solid #c9ccd1;border-radius:1.2px"></div><div class="a" style="left:415.30px;top:399.44px;font-size:5.2px;color:#4aa861;font-weight:normal;">In stock</div>
<div class="a" style="left:463.80px;top:399.46px;font-size:5.17px;color:#3e4146;font-weight:normal;">Published</div>
<div class="a" style="left:501.40px;top:399.29px;font-size:5.37px;color:#65686e;font-weight:normal;">Uncategorized</div>
<div class="a" style="left:636.60px;top:399.35px;font-size:5.3px;color:#3e4146;font-weight:normal;">Taxable</div>
<div class="a" style="left:678.20px;top:399.12px;font-size:5.58px;color:#6a6e75;font-weight:normal;">Variation</div>
<div class="a" style="left:645.70px;top:419.20px;font-size:5.55px;color:#7168ee;font-weight:bold;font-style:italic;-webkit-text-stroke:0">50000 of 195100 Products loaded</div>
<div class="r" style="left:738.3px;top:415.3px;width:30px;height:12.8px;background:#fff;border:0.8px solid #8a82f2;border-radius:2px"></div><div class="a" style="left:741.30px;top:418.92px;font-size:6px;color:#6a63ef;font-weight:normal;">Load</div>
<svg class="r" style="left:0;top:0;overflow:visible" width="750" height="430" viewBox="0 0 750 430"><path d="M139.4,19.8 C150,25 162.3,36 162,45.5 C161.8,55 153,60.8 146.6,60.6 C139,60.4 134.5,55.5 135.7,49.5 C137.5,40 148,27 157,22.5 C162,20 167,18.8 172,18.8 C188,19.5 200,36 203,50 C204,56 204,61 204,66.6" fill="none" stroke="#66696f" stroke-width="1.1" stroke-linecap="round" stroke-linejoin="round"/><path d="M197.2,61.4 L204,66.8 L210.8,59.8" fill="none" stroke="#66696f" stroke-width="1.1" stroke-linecap="round" stroke-linejoin="round"/><path d="M252.9,58.7 C255,66 256,74 255,80 C254,87 246,96 240.4,102.4" fill="none" stroke="#66696f" stroke-width="1.1" stroke-linecap="round" stroke-linejoin="round"/><path d="M241.5,96 L240.4,102.4 L247,102.8" fill="none" stroke="#66696f" stroke-width="1.1" stroke-linecap="round" stroke-linejoin="round"/><path d="M362.4,51.8 C361,60 359.5,66 359.8,72 C360,80 363,86 368,91 C372,95 376,98 379.7,101.6" fill="none" stroke="#66696f" stroke-width="1.1" stroke-linecap="round" stroke-linejoin="round"/><path d="M378.2,94.8 L379.7,101.6 L372.2,101.6" fill="none" stroke="#66696f" stroke-width="1.1" stroke-linecap="round" stroke-linejoin="round"/><path d="M491.4,28.4 C482,36 474,42 468,52 C462,62 459,72 458.5,82 C458,90 457.6,97 457.6,103.4" fill="none" stroke="#66696f" stroke-width="1.1" stroke-linecap="round" stroke-linejoin="round"/><path d="M450.2,96.1 L457.6,103.4 L462.8,95.1" fill="none" stroke="#66696f" stroke-width="1.1" stroke-linecap="round" stroke-linejoin="round"/><path d="M674.1,23.3 C665,28 657,36 654.2,44.3 C651,55 662,60 668,66 C673,72 672,80 664,86 C652,94 636,100 616.6,105.2" fill="none" stroke="#66696f" stroke-width="1.1" stroke-linecap="round" stroke-linejoin="round"/><path d="M627.7,95.2 L616.6,105.2 L629.9,110.3" fill="none" stroke="#66696f" stroke-width="1.1" stroke-linecap="round" stroke-linejoin="round"/><path d="M-2,104.6 C25,99.8 55,92 82.4,81.3" fill="none" stroke="#66696f" stroke-width="1.1" stroke-linecap="round" stroke-linejoin="round"/><path d="M73.9,78.2 L82.4,81.3 L79.3,88.7" fill="none" stroke="#66696f" stroke-width="1.1" stroke-linecap="round" stroke-linejoin="round"/><path d="M-1,121.5 L2.6,114.6 L7.2,131" fill="none" stroke="#66696f" stroke-width="1.1" stroke-linecap="round" stroke-linejoin="round"/><path d="M-2,364.2 C30,363.5 60,361 92,356.3" fill="none" stroke="#66696f" stroke-width="1.1" stroke-linecap="round" stroke-linejoin="round"/><path d="M83.3,351.7 L92,356.3 L87.3,363.7" fill="none" stroke="#66696f" stroke-width="1.1" stroke-linecap="round" stroke-linejoin="round"/></svg>
</div></body></html>
